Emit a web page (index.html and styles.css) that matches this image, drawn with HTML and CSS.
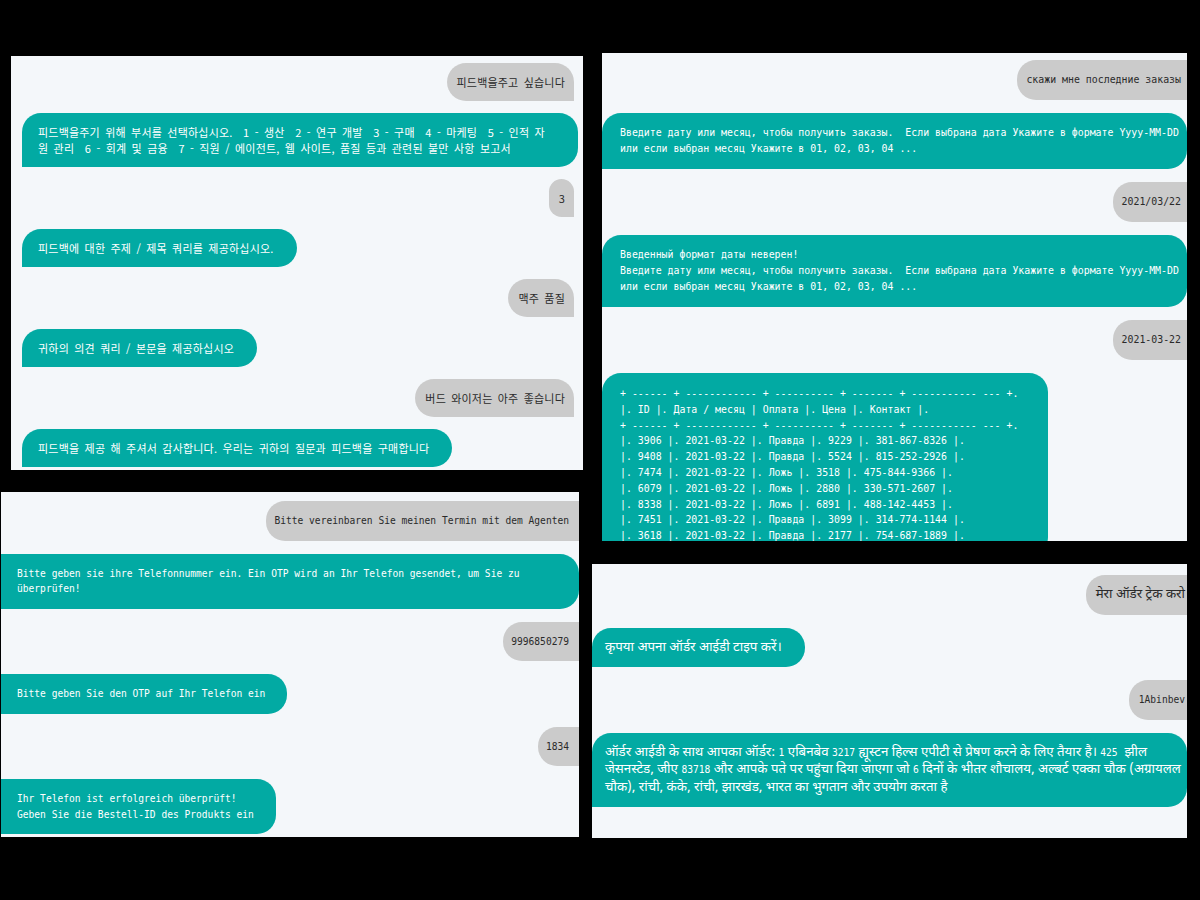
FILE: index.html
```html
<!DOCTYPE html>
<html lang="ko">
<head>
<meta charset="utf-8">
<title>Chatbot conversations</title>
<link rel="stylesheet" href="styles.css">
</head>
<body>
<main class="desk">
  <section class="shot shot-ko">
    <div class="chat">
      <div class="msg user">피드백을주고 싶습니다</div>
      <div class="msg bot full">피드백을주기 위해 부서를 선택하십시오.  1 - 생산  2 - 연구 개발  3 - 구매  4 - 마케팅  5 - 인적 자<br>원 관리  6 - 회계 및 금융  7 - 직원 / 에이전트, 웹 사이트, 품질 등과 관련된 불만 사항 보고서</div>
      <div class="msg user">3</div>
      <div class="msg bot">피드백에 대한 주제 / 제목 쿼리를 제공하십시오.</div>
      <div class="msg user">맥주 품질</div>
      <div class="msg bot">귀하의 의견 쿼리 / 본문을 제공하십시오</div>
      <div class="msg user">버드 와이저는 아주 좋습니다</div>
      <div class="msg bot">피드백을 제공 해 주셔서 감사합니다. 우리는 귀하의 질문과 피드백을 구매합니다</div>
    </div>
  </section>

  <section class="shot shot-ru">
    <div class="chat">
      <div class="msg user">скажи мне последние заказы</div>
      <div class="msg bot full">Введите дату или месяц, чтобы получить заказы.  Если выбрана дата Укажите в формате Yyyy-MM-DD<br>или если выбран месяц Укажите в 01, 02, 03, 04 ...</div>
      <div class="msg user">2021/03/22</div>
      <div class="msg bot full">Введенный формат даты неверен!<br>Введите дату или месяц, чтобы получить заказы.  Если выбрана дата Укажите в формате Yyyy-MM-DD<br>или если выбран месяц Укажите в 01, 02, 03, 04 ...</div>
      <div class="msg user">2021-03-22</div>
      <div class="msg bot table">+ ------ + ------------ + ---------- + ------- + ----------- --- +.<br>|. ID |. Дата / месяц | Оплата |. Цена |. Контакт |.<br>+ ------ + ------------ + ---------- + ------- + ----------- --- +.<br>|. 3906 |. 2021-03-22 |. Правда |. 9229 |. 381-867-8326 |.<br>|. 9408 |. 2021-03-22 |. Правда |. 5524 |. 815-252-2926 |.<br>|. 7474 |. 2021-03-22 |. Ложь |. 3518 |. 475-844-9366 |.<br>|. 6079 |. 2021-03-22 |. Ложь |. 2880 |. 330-571-2607 |.<br>|. 8338 |. 2021-03-22 |. Ложь |. 6891 |. 488-142-4453 |.<br>|. 7451 |. 2021-03-22 |. Правда |. 3099 |. 314-774-1144 |.<br>|. 3618 |. 2021-03-22 |. Правда |. 2177 |. 754-687-1889 |.</div>
    </div>
  </section>

  <section class="shot shot-de">
    <div class="chat">
      <div class="msg user">Bitte vereinbaren Sie meinen Termin mit dem Agenten</div>
      <div class="msg bot full">Bitte geben sie ihre Telefonnummer ein. Ein OTP wird an Ihr Telefon gesendet, um Sie zu<br>überprüfen!</div>
      <div class="msg user">9996850279</div>
      <div class="msg bot">Bitte geben Sie den OTP auf Ihr Telefon ein</div>
      <div class="msg user">1834</div>
      <div class="msg bot">Ihr Telefon ist erfolgreich überprüft!<br>Geben Sie die Bestell-ID des Produkts ein</div>
    </div>
  </section>

  <section class="shot shot-hi" lang="hi">
    <div class="chat">
      <div class="msg user">मेरा ऑर्डर ट्रेक करो</div>
      <div class="msg bot">कृपया अपना ऑर्डर आईडी टाइप करें।</div>
      <div class="msg user"><span class="lat">1Abinbev</span></div>
      <div class="msg bot full">ऑर्डर आईडी के साथ आपका ऑर्डर: <span class="lat">1</span> एबिनबेव <span class="lat">3217</span> ह्यूस्टन हिल्स एपीटी से प्रेषण करने के लिए तैयार है। <span class="lat">425</span>  झील<br>जेसनस्टेड, जीए <span class="lat">83718</span> और आपके पते पर पहुंचा दिया जाएगा जो <span class="lat">6</span> दिनों के भीतर शौचालय, अल्बर्ट एक्का चौक (अग्रायलल<br>चौक), रांची, कंके, रांची, झारखंड, भारत का भुगतान और उपयोग करता है</div>
    </div>
  </section>
</main>
</body>
</html>
```

FILE: styles.css
```css
html, body {
  margin: 0;
  padding: 0;
  background: #000;
}

.desk {
  position: relative;
  width: 1200px;
  height: 900px;
  background: #000;
  overflow: hidden;
}

/* each screenshot is placed on the black canvas like a window on a desktop */
.shot {
  position: absolute;
  background: #f4f7fa;
  overflow: hidden;
}

.shot-ko { left: 11px;  top: 56px;  width: 572px; height: 414px; }
.shot-ru { left: 602px; top: 53px;  width: 585px; height: 488px; }
.shot-de { left: 1px;   top: 492px; width: 578px; height: 345px; }
.shot-hi { left: 592px; top: 564px; width: 595px; height: 274px; }

.chat {
  display: flex;
  flex-direction: column;
  align-items: flex-start;
  gap: 13px;
}

.msg {
  white-space: pre;
  border-radius: 19px;
}

.msg.user {
  align-self: flex-end;
  background: #cbcbcb;
  color: #2a2a2a;
}

.msg.bot {
  background: #02aaa3;
  color: #fff;
}

.msg.full {
  align-self: stretch;
}

/* Korean panel */
.shot-ko .chat {
  padding: 7px 5px 0 11px;
  gap: 12px;
}
.shot-ko .msg {
  font-family: "Noto Sans CJK KR", "Noto Sans", sans-serif;
  font-size: 11px;
  line-height: 16px;
  letter-spacing: 0.2px;
  word-spacing: 2px;
}
.shot-ko .msg.user {
  margin-right: 4px;
  padding: 11px 9px 11px 10px;
  border-bottom-right-radius: 0;
}
.shot-ko .msg.bot {
  padding: 11px 23px 11px 16px;
  border-bottom-left-radius: 0;
}

/* Russian panel */
.shot-ru .chat {
  padding-top: 7px;
}
.shot-ru .msg {
  font-family: "DejaVu Sans Mono", "Liberation Mono", monospace;
  font-size: 9.9px;
  line-height: 16px;
}
.shot-ru .msg.user {
  padding: 12px 6px 12px 9px;
  border-top-right-radius: 0;
  border-bottom-right-radius: 0;
}
.shot-ru .msg.bot {
  padding: 12px 19px 12px 18px;
  border-bottom-left-radius: 0;
}
.shot-ru .msg.table {
  padding: 13px 30px 12px 18px;
  line-height: 15.8px;
}

/* German panel */
.shot-de .chat {
  padding-top: 9px;
}
.shot-de .msg {
  font-family: "DejaVu Sans Mono", "Liberation Mono", monospace;
  font-size: 9.6px;
  line-height: 15.5px;
}
.shot-de .msg.user {
  padding: 12px 10px 12px 8px;
  border-top-right-radius: 0;
  border-bottom-right-radius: 0;
}
.shot-de .msg.bot {
  padding: 12px 22px 12px 16px;
  border-top-left-radius: 0;
  border-bottom-left-radius: 0;
}

/* Hindi panel */
.shot-hi .chat {
  padding-top: 11px;
}
.shot-hi .msg {
  font-family: "Noto Sans Devanagari", "Lohit Devanagari", "Mukta", "FreeSans", "Noto Sans", sans-serif;
  font-size: 13.3px;
  line-height: 17.5px;
}
.shot-hi .lat {
  font-family: "DejaVu Sans Mono", "Liberation Mono", monospace;
  font-size: 9.6px;
}
.shot-hi .msg.user {
  padding: 11px 2px 11px 10px;
  border-top-right-radius: 0;
  border-bottom-right-radius: 0;
}
.shot-hi .msg.bot {
  padding: 11px 23px 11px 13px;
  border-bottom-left-radius: 0;
}
```
